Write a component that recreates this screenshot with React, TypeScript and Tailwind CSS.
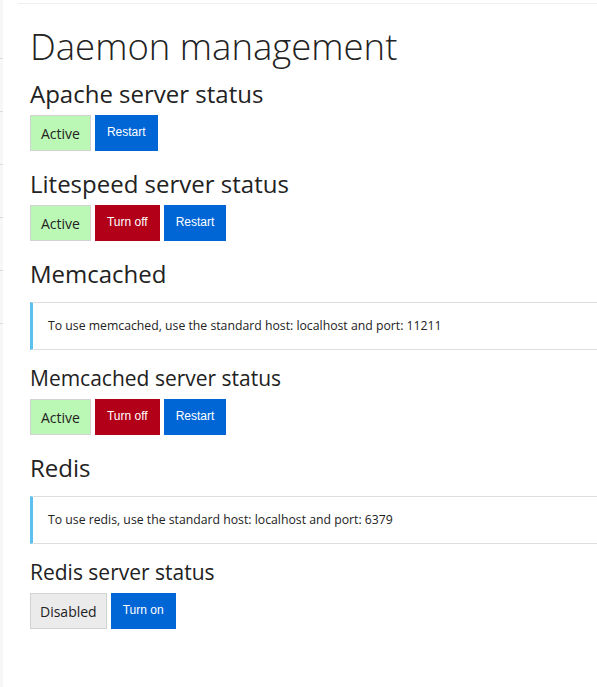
const font = { fontFamily: '"Open Sans", "Liberation Sans", sans-serif' };

type Btn = { label: string; kind: "active" | "disabled" | "red" | "blue" };

function StatusBadge({ label, kind }: Btn) {
  if (kind === "active" || kind === "disabled") {
    return (
      <span
        className={
          "h-9 flex items-center text-[14px] text-[#222] border border-[#d2d2d2] " +
          (kind === "active" ? "px-[10px] bg-[#bcf8b5]" : "px-[9px] bg-[#ebebeb]")
        }
      >
        {label}
      </span>
    );
  }
  return (
    <button
      className={
        "h-9 px-3 flex items-center pb-[2px] text-[12px] text-white font-['Liberation_Sans',Arial,sans-serif] " +
        (kind === "red" ? "bg-[#b20018]" : "bg-[#0066d6]")
      }
    >
      {label}
    </button>
  );
}

function Buttons({ buttons }: { buttons: Btn[] }) {
  return (
    <div className="flex gap-1">
      {buttons.map((b) => (
        <StatusBadge key={b.label} {...b} />
      ))}
    </div>
  );
}

function Section({ title, buttons }: { title: string; buttons: Btn[] }) {
  return (
    <div className="mb-5">
      <h2 className="text-[24px] leading-[26px] text-[#222] mb-2">{title}</h2>
      <Buttons buttons={buttons} />
    </div>
  );
}

function SubSection({ title, buttons }: { title: string; buttons: Btn[] }) {
  return (
    <div className="mb-5">
      <h3 className="text-[21px] leading-[23px] text-[#222] mb-[9px]">{title}</h3>
      <Buttons buttons={buttons} />
    </div>
  );
}

function Info({ children }: { children: React.ReactNode }) {
  return (
    <div className="w-[620px] mt-[15px] mb-[17px] border-y border-[#dedede] border-l-[3px] border-l-[#5ec0ec] px-[15px] py-[14px] text-[12.25px] leading-[18px] text-[#222]">
      {children}
    </div>
  );
}

export default function App() {
  return (
    <div className="flex h-screen overflow-hidden bg-white" style={font}>
      <div className="w-[3px] shrink-0 bg-[#f7f7f7] flex flex-col">
        <div className="h-[59px] border-b border-[#d9d9d9]" />
        {[0, 1, 2, 3, 4].map((i) => (
          <div key={i} className="h-[53px] border-b border-[#d9d9d9]" />
        ))}
      </div>
      <div className="flex-1 min-w-0 overflow-hidden">
        <div className="h-[3px]" />
        <div className="ml-[15px] h-px bg-[#efefef]" />
        <div className="pl-[27px] pt-[22px]">
          <h1 className="text-[36.5px] leading-[40px] font-light text-[#222] mb-[15px]">
            Daemon management
          </h1>
          <Section
            title="Apache server status"
            buttons={[
              { label: "Active", kind: "active" },
              { label: "Restart", kind: "blue" },
            ]}
          />
          <Section
            title="Litespeed server status"
            buttons={[
              { label: "Active", kind: "active" },
              { label: "Turn off", kind: "red" },
              { label: "Restart", kind: "blue" },
            ]}
          />
          <h2 className="text-[24px] leading-[26px] text-[#222]">Memcached</h2>
          <Info>To use memcached, use the standard host: localhost and port: 11211</Info>
          <SubSection
            title="Memcached server status"
            buttons={[
              { label: "Active", kind: "active" },
              { label: "Turn off", kind: "red" },
              { label: "Restart", kind: "blue" },
            ]}
          />
          <h2 className="text-[24px] leading-[26px] text-[#222]">Redis</h2>
          <Info>To use redis, use the standard host: localhost and port: 6379</Info>
          <SubSection
            title="Redis server status"
            buttons={[
              { label: "Disabled", kind: "disabled" },
              { label: "Turn on", kind: "blue" },
            ]}
          />
        </div>
      </div>
    </div>
  );
}
